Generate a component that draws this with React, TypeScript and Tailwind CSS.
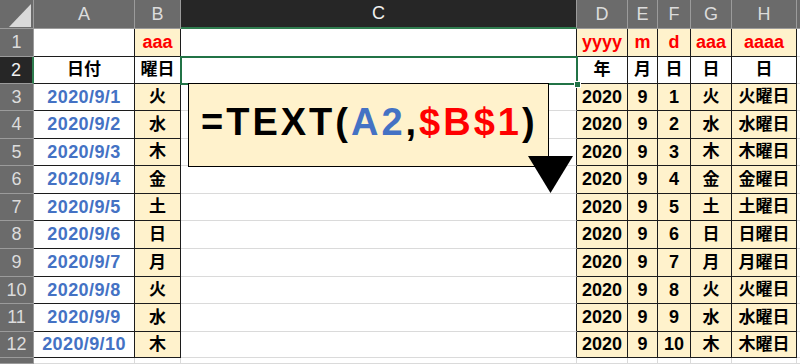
const days = ["火", "水", "木", "金", "土", "日", "月", "火", "水", "木"];
const cols = ["A", "B", "C", "D", "E", "F", "G", "H"];

type Cell = {
  text?: string;
  tone?: "red" | "blue" | "black";
  cream?: boolean;
  right: "k" | "g" | "n";
  bottom: "k" | "g";
};

function buildRow(r: number): Cell[] {
  if (r === 1) {
    return [
      { right: "k", bottom: "k" },
      { text: "aaa", tone: "red", cream: true, right: "k", bottom: "k" },
      { right: "k", bottom: "g" },
      { text: "yyyy", tone: "red", cream: true, right: "k", bottom: "k" },
      { text: "m", tone: "red", cream: true, right: "k", bottom: "k" },
      { text: "d", tone: "red", cream: true, right: "k", bottom: "k" },
      { text: "aaa", tone: "red", cream: true, right: "k", bottom: "k" },
      { text: "aaaa", tone: "red", cream: true, right: "k", bottom: "k" },
      { right: "n", bottom: "g" },
    ];
  }
  if (r === 2) {
    return [
      { text: "日付", tone: "black", right: "k", bottom: "k" },
      { text: "曜日", tone: "black", right: "k", bottom: "k" },
      { right: "k", bottom: "g" },
      { text: "年", tone: "black", right: "k", bottom: "k" },
      { text: "月", tone: "black", right: "k", bottom: "k" },
      { text: "日", tone: "black", right: "k", bottom: "k" },
      { text: "日", tone: "black", right: "k", bottom: "k" },
      { text: "日", tone: "black", right: "k", bottom: "k" },
      { right: "n", bottom: "g" },
    ];
  }
  if (r === 13) {
    return [
      { right: "g", bottom: "g" },
      { right: "g", bottom: "g" },
      { right: "g", bottom: "g" },
      { right: "g", bottom: "g" },
      { right: "g", bottom: "g" },
      { right: "g", bottom: "g" },
      { right: "g", bottom: "g" },
      { right: "g", bottom: "g" },
      { right: "n", bottom: "g" },
    ];
  }
  const d = r - 2;
  const w = days[d - 1];
  return [
    { text: `2020/9/${d}`, tone: "blue", right: "k", bottom: "k" },
    { text: w, tone: "black", cream: true, right: "k", bottom: "k" },
    { right: "k", bottom: "g" },
    { text: "2020", tone: "black", cream: true, right: "k", bottom: "k" },
    { text: "9", tone: "black", cream: true, right: "k", bottom: "k" },
    { text: String(d), tone: "black", cream: true, right: "k", bottom: "k" },
    { text: w, tone: "black", cream: true, right: "k", bottom: "k" },
    { text: `${w}曜日`, tone: "black", cream: true, right: "k", bottom: "k" },
    { right: "n", bottom: "g" },
  ];
}

function DataCell({ cell }: { cell: Cell }) {
  const right =
    cell.right === "k"
      ? "border-r border-r-[#1c1c1c]"
      : cell.right === "g"
        ? "border-r border-r-[#dadada]"
        : "";
  const bottom = cell.bottom === "k" ? "border-b-[#1c1c1c]" : "border-b-[#dadada]";
  const tone =
    cell.tone === "red"
      ? "text-[#ff0000]"
      : cell.tone === "blue"
        ? "text-[#4472c4] tracking-[0.4px]"
        : "text-black";
  // kanji cells read a touch smaller than the digits
  const size = /[\u3000-\u9fff]/.test(cell.text ?? "") ? "text-[17px]" : "text-[18px]";
  return (
    <div
      className={`flex items-center justify-center border-b ${bottom} ${right} ${
        cell.cream ? "bg-[#fff2cc]" : "bg-white"
      } ${tone} ${size} font-bold whitespace-nowrap overflow-hidden`}
    >
      {cell.text}
    </div>
  );
}

export default function App() {
  const rows = Array.from({ length: 13 }, (_, i) => i + 1);
  return (
    <div className="relative w-[800px] h-[364px] overflow-hidden bg-white font-['Liberation_Sans','Noto_Sans_CJK_JP',sans-serif]">
      <div className="grid grid-cols-[34px_101px_46px_396px_51px_30px_33px_41px_65px_3px] grid-rows-[29px_28px_27px_27px_28px_27px_28px_27px_28px_28px_27px_28px_26px_6px]">
        {/* corner */}
        <div className="relative bg-[#6b6b6b] border-r border-b border-[#9b9b9b]">
          <svg className="absolute left-[9px] top-[4px]" width="22" height="23" viewBox="0 0 22 23">
            <polygon points="0,23 22,0 22,23" fill="#d9d9d9" />
          </svg>
        </div>
        {cols.map((c) =>
          c === "C" ? (
            <div
              key={c}
              className="flex items-center justify-center bg-[#262626] border-r border-r-[#9b9b9b] border-b-2 border-b-[#2f7d4f] text-[18px] text-[#f0f0f0]"
            >
              {c}
            </div>
          ) : (
            <div
              key={c}
              className="flex items-center justify-center bg-[#6b6b6b] border-r border-b border-[#9b9b9b] text-[18px] text-[#dcdcdc]"
            >
              {c}
            </div>
          )
        )}
        <div className="bg-[#6b6b6b] border-b border-[#9b9b9b]" />

        {rows.map((r) => (
          <div key={r} className="contents">
            {r === 2 ? (
              <div className="flex items-center justify-center bg-[#262626] border-r-2 border-r-[#2f7d4f] border-b border-b-[#9b9b9b] text-[18px] text-[#f0f0f0]">
                {r}
              </div>
            ) : (
              <div className="flex items-center justify-center bg-[#6b6b6b] border-r border-b border-[#9b9b9b] text-[18px] text-[#dcdcdc]">
                {r === 13 ? "" : r}
              </div>
            )}
            {buildRow(r).map((cell, i) => (
              <DataCell key={i} cell={cell} />
            ))}
          </div>
        ))}
      </div>

      {/* selected cell C2 */}
      <div className="absolute left-[180px] top-[56px] w-[398px] h-[29px] border-2 border-[#217346]" />
      <div className="absolute left-[574px] top-[81px] w-[7px] h-[7px] bg-[#217346] border border-white" />

      {/* formula callout */}
      <div className="absolute left-[188px] top-[83px] w-[361px] h-[84px] bg-[#fff2cc] border border-black pl-[12px] pt-[19px]">
        <div className="text-[38px] leading-none font-bold tracking-[3px] whitespace-nowrap text-black">
          =TEXT(<span className="text-[#4472c4]">A2</span>,<span className="text-[#ff0000]">$B$1</span>)
        </div>
      </div>
      <svg className="absolute left-[528px] top-[156px]" width="45" height="37" viewBox="0 0 45 37">
        <polygon points="0,0 45,0 22.5,37" fill="#000" />
      </svg>
    </div>
  );
}
